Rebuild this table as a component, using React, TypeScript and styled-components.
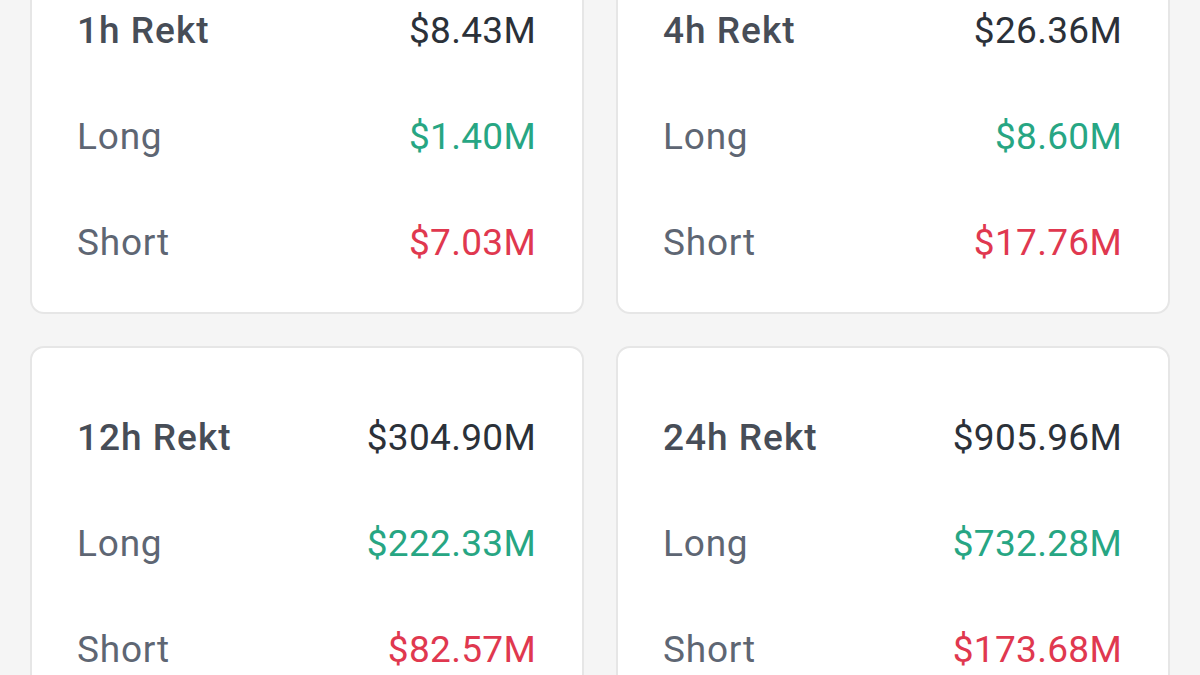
import React from "react";
import styled, { createGlobalStyle } from "styled-components";

const Global = createGlobalStyle`
  html, body { margin: 0; padding: 0; background: #f5f5f5; overflow: hidden; }
  body { font-family: Roboto, "Noto Sans", "DejaVu Sans", sans-serif; }
`;

const Page = styled.div`
  width: 1200px;
  height: 675px;
  overflow: hidden;
  background: #f5f5f5;
`;

const Grid = styled.div`
  display: grid;
  grid-template-columns: 554px 554px;
  column-gap: 32px;
  row-gap: 32px;
  padding: 0 30px;
  margin-top: -61px;
`;

const Card = styled.div`
  background: #ffffff;
  border: 2px solid #e6e6e6;
  border-radius: 14px;
  padding: 36px 46px 17px 45px;
  display: flex;
  flex-direction: column;
`;

const Row = styled.div`
  height: 106px;
  display: flex;
  align-items: center;
  justify-content: space-between;
  font-size: 37px;
`;

const Label = styled.span<{ $title?: boolean }>`
  color: ${(p) => (p.$title ? "#474d57" : "#5e6673")};
  font-weight: ${(p) => (p.$title ? 500 : 400)};
  letter-spacing: ${(p) => (p.$title ? "1px" : "0.8px")};
`;

const Value = styled.span<{ $tone: "main" | "up" | "down" }>`
  color: ${(p) =>
    p.$tone === "up" ? "#27a683" : p.$tone === "down" ? "#e0384f" : "#2b3139"};
  font-weight: 400;
  letter-spacing: 0.3px;
`;

const data = [
  { t: "1h Rekt", total: "$8.43M", long: "$1.40M", short: "$7.03M" },
  { t: "4h Rekt", total: "$26.36M", long: "$8.60M", short: "$17.76M" },
  { t: "12h Rekt", total: "$304.90M", long: "$222.33M", short: "$82.57M" },
  { t: "24h Rekt", total: "$905.96M", long: "$732.28M", short: "$173.68M" },
];

export default function App() {
  return (
    <Page>
      <Global />
      <Grid>
        {data.map((d) => (
          <Card key={d.t}>
            <Row>
              <Label $title>{d.t}</Label>
              <Value $tone="main">{d.total}</Value>
            </Row>
            <Row>
              <Label>Long</Label>
              <Value $tone="up">{d.long}</Value>
            </Row>
            <Row>
              <Label>Short</Label>
              <Value $tone="down">{d.short}</Value>
            </Row>
          </Card>
        ))}
      </Grid>
    </Page>
  );
}
